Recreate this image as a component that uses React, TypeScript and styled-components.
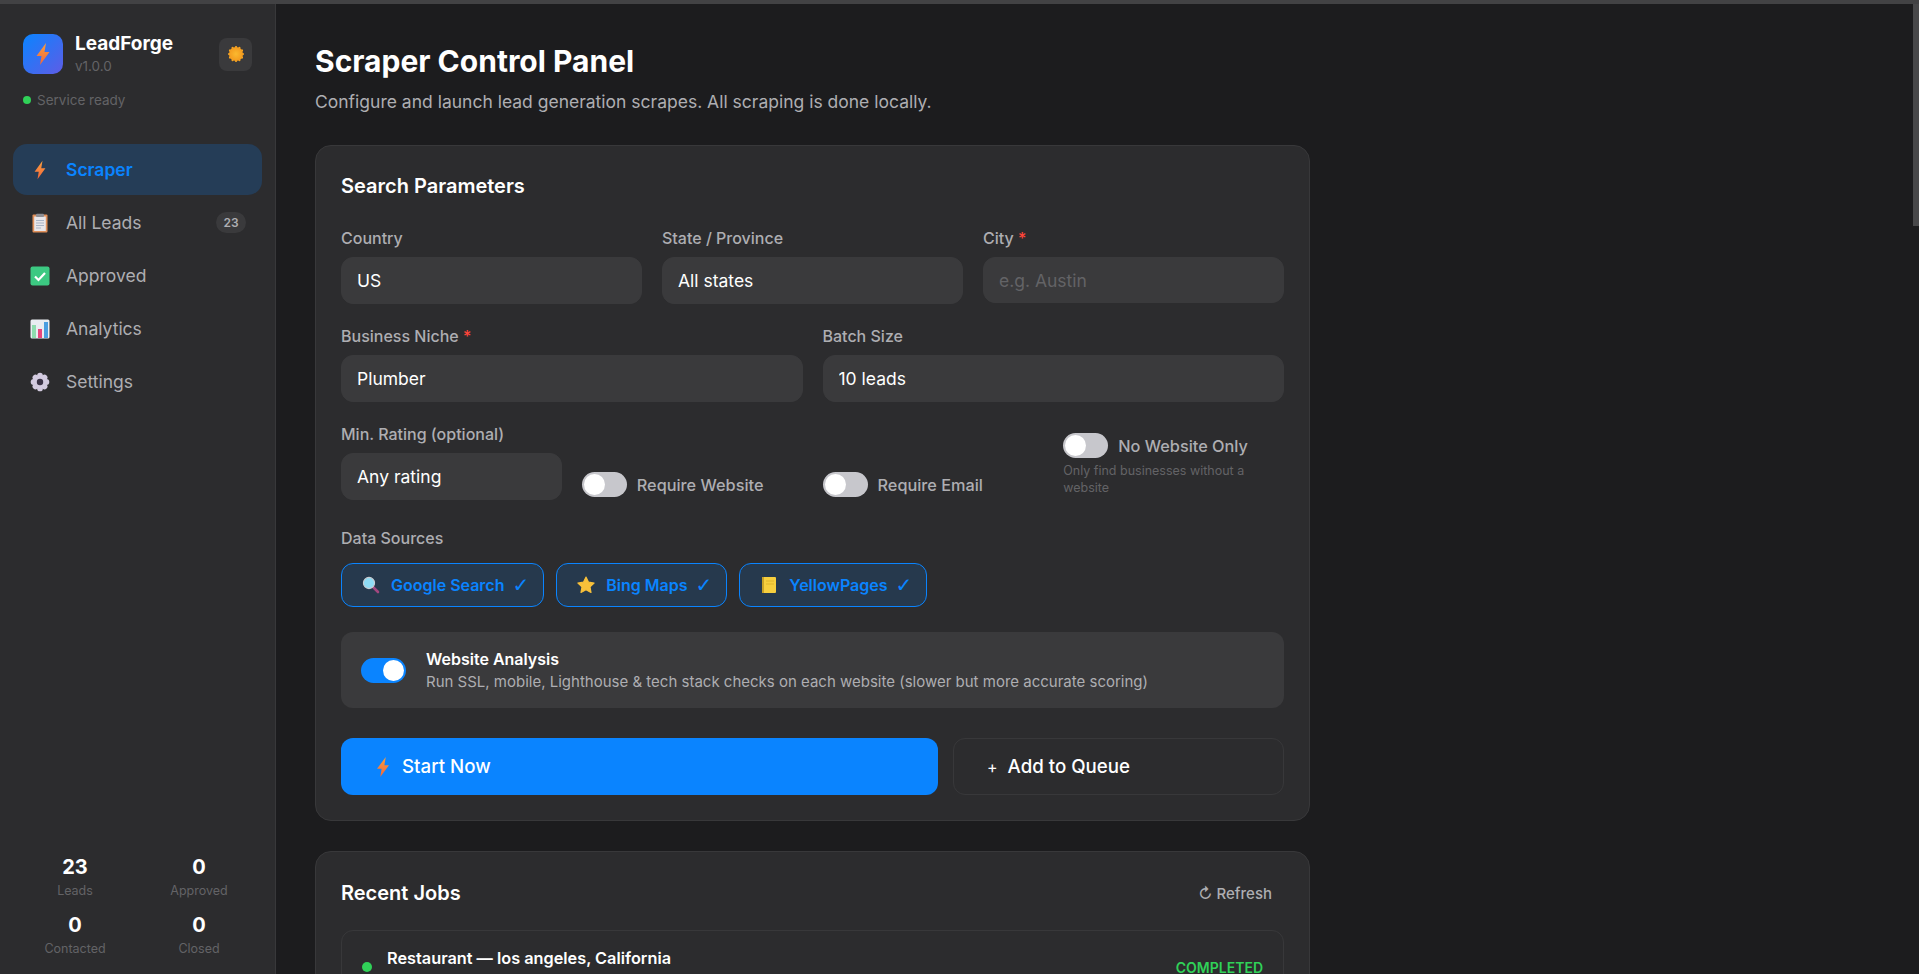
import React from "react";
import styled, { createGlobalStyle } from "styled-components";

const GlobalStyle = createGlobalStyle`
  * { box-sizing: border-box; }
  html, body { margin: 0; height: 100%; overflow: hidden; background: #1c1c1e; }
  body { font-family: Inter, "Noto Sans", "Liberation Sans", sans-serif; color: #fff; }
`;

function Bolt({ size = 20 }: { size?: number }) {
  const id = `bolt-${size}`;
  return (
    <svg width={size} height={size} viewBox="0 0 24 24">
      <defs>
        <linearGradient id={id} x1="0" y1="0" x2="0" y2="1">
          <stop offset="0" stopColor="#f9a03f" />
          <stop offset="1" stopColor="#f2653a" />
        </linearGradient>
      </defs>
      <path d="M15 1 L5.5 14 H10.5 L9 23 L18.5 10 H13.5 Z" fill={`url(#${id})`} />
    </svg>
  );
}

function Sun() {
  const rays = Array.from({ length: 12 }, (_, i) => i * 30);
  return (
    <svg width="18" height="18" viewBox="0 0 24 24">
      <defs>
        <radialGradient id="sun">
          <stop offset="0" stopColor="#fbb92f" />
          <stop offset="1" stopColor="#f39a1e" />
        </radialGradient>
      </defs>
      {rays.map((r) => (
        <circle key={r} cx="12" cy="2.8" r="1.5" fill="#f5a623" transform={`rotate(${r} 12 12)`} />
      ))}
      <circle cx="12" cy="12" r="9.4" fill="url(#sun)" />
    </svg>
  );
}

function Clipboard() {
  return (
    <svg width="20" height="20" viewBox="0 0 20 20">
      <rect x="2.5" y="1.5" width="15" height="18" rx="1" fill="#e0905a" />
      <rect x="4.2" y="3.5" width="11.6" height="14.5" fill="#e8e6ea" />
      <rect x="6" y="0.8" width="8" height="3.2" rx="1" fill="#8e8e93" />
      <path d="M6 7.5h8M6 10h8M6 12.5h8M6 15h5" stroke="#a9b4c6" strokeWidth="1.1" />
    </svg>
  );
}

function CheckBox() {
  return (
    <svg width="20" height="20" viewBox="0 0 20 20">
      <rect x="0.5" y="0.5" width="19" height="19" rx="2" fill="#3cc982" />
      <path d="M5 10.5 L8.5 14 L15 7" fill="none" stroke="#fff" strokeWidth="2.2" />
    </svg>
  );
}

function BarChart() {
  return (
    <svg width="20" height="20" viewBox="0 0 20 20">
      <rect x="0.5" y="0.5" width="19" height="19" rx="1.5" fill="#e9edf1" />
      <rect x="2" y="6" width="4" height="13" fill="#8fdcae" />
      <rect x="8" y="10" width="4" height="9" fill="#e8467c" />
      <rect x="14" y="3" width="4" height="16" fill="#4a9ee0" />
    </svg>
  );
}

function Gear() {
  const teeth = Array.from({ length: 8 }, (_, i) => i * 45);
  return (
    <svg width="20" height="20" viewBox="0 0 20 20">
      {teeth.map((r) => (
        <circle key={r} cx="10" cy="3.6" r="2.9" fill="#d3cbe0" transform={`rotate(${r} 10 10)`} />
      ))}
      <circle cx="10" cy="10" r="6" fill="#d3cbe0" />
      <circle cx="10" cy="10" r="3.2" fill="#3a3346" />
    </svg>
  );
}

function Magnifier() {
  return (
    <svg width="18" height="18" viewBox="0 0 18 18">
      <path d="M11 11 L16 16" stroke="#a2477f" strokeWidth="2.6" strokeLinecap="round" />
      <circle cx="7" cy="7" r="5.6" fill="#8fdcf5" stroke="#c8ccd2" strokeWidth="1.1" />
    </svg>
  );
}

function Star() {
  return (
    <svg width="18" height="18" viewBox="0 0 24 24">
      <path
        d="M12 1.5 L15.4 8.2 L22.8 9.3 L17.4 14.5 L18.7 22 L12 18.4 L5.3 22 L6.6 14.5 L1.2 9.3 L8.6 8.2 Z"
        fill="#f8c03a"
        stroke="#f8c03a"
        strokeWidth="1.5"
        strokeLinejoin="round"
      />
    </svg>
  );
}

function Notebook() {
  return (
    <svg width="18" height="18" viewBox="0 0 18 18">
      <rect x="2" y="1" width="14" height="16" rx="1" fill="#f7cf3e" />
      <rect x="2" y="1" width="2" height="16" fill="#c9a227" />
      <path d="M6 5h8M6 8h8" stroke="#e0b52c" strokeWidth="1" />
    </svg>
  );
}

const navItems = [
  { label: "Scraper", icon: <Bolt size={22} />, active: true },
  { label: "All Leads", icon: <Clipboard />, badge: "23" },
  { label: "Approved", icon: <CheckBox /> },
  { label: "Analytics", icon: <BarChart /> },
  { label: "Settings", icon: <Gear /> },
];

const stats = [
  { value: "23", label: "Leads" },
  { value: "0", label: "Approved" },
  { value: "0", label: "Contacted" },
  { value: "0", label: "Closed" },
];

const sources = [
  { label: "Google Search", icon: <Magnifier /> },
  { label: "Bing Maps", icon: <Star /> },
  { label: "YellowPages", icon: <Notebook /> },
];

function App() {
  return (
    <Page>
      <GlobalStyle />
      <TopStrip />
      <Shell>
        <Sidebar>
          <BrandRow>
            <LogoTile>
              <Bolt size={24} />
            </LogoTile>
            <BrandText>
              <BrandName>LeadForge</BrandName>
              <BrandVersion>v1.0.0</BrandVersion>
            </BrandText>
            <ThemeButton>
              <Sun />
            </ThemeButton>
          </BrandRow>
          <ServiceRow>
            <ServiceDot />
            Service ready
          </ServiceRow>
          <Nav>
            {navItems.map((item) => (
              <NavItem key={item.label} $active={item.active}>
                <NavIcon>{item.icon}</NavIcon>
                {item.label}
                {item.badge && <NavBadge>{item.badge}</NavBadge>}
              </NavItem>
            ))}
          </Nav>
          <StatsGrid>
            {stats.map((s) => (
              <StatCell key={s.label}>
                <StatValue>{s.value}</StatValue>
                <StatLabel>{s.label}</StatLabel>
              </StatCell>
            ))}
          </StatsGrid>
        </Sidebar>

        <Main>
          <Content>
            <PageTitle>Scraper Control Panel</PageTitle>
            <PageSub>Configure and launch lead generation scrapes. All scraping is done locally.</PageSub>

            <Card>
              <CardTitle>Search Parameters</CardTitle>
              <ThreeCols>
                <Field>
                  <Label>Country</Label>
                  <Select defaultValue="US">
                    <option>US</option>
                  </Select>
                </Field>
                <Field>
                  <Label>State / Province</Label>
                  <Select defaultValue="All states">
                    <option>All states</option>
                  </Select>
                </Field>
                <Field>
                  <Label>
                    City <Required>*</Required>
                  </Label>
                  <TextInput placeholder="e.g. Austin" />
                </Field>
              </ThreeCols>
              <TwoCols>
                <Field>
                  <Label>
                    Business Niche <Required>*</Required>
                  </Label>
                  <Select defaultValue="Plumber">
                    <option>Plumber</option>
                  </Select>
                </Field>
                <Field>
                  <Label>Batch Size</Label>
                  <Select defaultValue="10 leads">
                    <option>10 leads</option>
                  </Select>
                </Field>
              </TwoCols>
              <FourCols>
                <Field>
                  <Label>Min. Rating (optional)</Label>
                  <Select defaultValue="Any rating">
                    <option>Any rating</option>
                  </Select>
                </Field>
                <ToggleRow>
                  <Toggle />
                  <ToggleLabel>Require Website</ToggleLabel>
                </ToggleRow>
                <ToggleRow>
                  <Toggle />
                  <ToggleLabel>Require Email</ToggleLabel>
                </ToggleRow>
                <div>
                  <ToggleRow>
                    <Toggle />
                    <ToggleLabel>No Website Only</ToggleLabel>
                  </ToggleRow>
                  <ToggleHint>Only find businesses without a website</ToggleHint>
                </div>
              </FourCols>

              <Label>Data Sources</Label>
              <Chips>
                {sources.map((s) => (
                  <Chip key={s.label}>
                    <ChipIcon>{s.icon}</ChipIcon>
                    {s.label}
                    <ChipCheck>✓</ChipCheck>
                  </Chip>
                ))}
              </Chips>

              <AnalysisBox>
                <Toggle $on />
                <div>
                  <AnalysisTitle>Website Analysis</AnalysisTitle>
                  <AnalysisDesc>
                    Run SSL, mobile, Lighthouse &amp; tech stack checks on each website (slower but more accurate scoring)
                  </AnalysisDesc>
                </div>
              </AnalysisBox>

              <Actions>
                <StartButton>
                  <Bolt size={22} />
                  Start Now
                </StartButton>
                <QueueButton>
                  <QueuePlus>+</QueuePlus>
                  Add to Queue
                </QueueButton>
              </Actions>
            </Card>

            <JobsCard>
              <JobsHeader>
                <JobsTitle>Recent Jobs</JobsTitle>
                <RefreshButton>↻ Refresh</RefreshButton>
              </JobsHeader>
              <JobRow>
                <JobDot />
                <JobName>Restaurant — los angeles, California</JobName>
                <JobStatus>COMPLETED</JobStatus>
              </JobRow>
            </JobsCard>
          </Content>
        </Main>
        <ScrollThumb />
      </Shell>
    </Page>
  );
}

const Page = styled.div`
  height: 974px;
  display: flex;
  flex-direction: column;
  background: #1c1c1e;
`;
const TopStrip = styled.div`
  height: 4px;
  flex: none;
  background: #424244;
`;
const Shell = styled.div`
  position: relative;
  flex: 1;
  min-height: 0;
  display: flex;
`;
const ScrollThumb = styled.div`
  position: absolute;
  top: 0;
  right: 0;
  width: 6px;
  height: 222px;
  background: #48484a;
`;

// sidebar
const Sidebar = styled.aside`
  width: 276px;
  flex: none;
  display: flex;
  flex-direction: column;
  background: #2c2c2e;
  border-right: 1px solid #38383a;
  padding: 29px 13px 0;
`;
const BrandRow = styled.div`
  display: flex;
  align-items: center;
  padding-left: 10px;
  padding-right: 10px;
`;
const LogoTile = styled.div`
  width: 40px;
  height: 40px;
  border-radius: 10px;
  background: linear-gradient(135deg, #0a84ff, #5e5ce6);
  display: flex;
  align-items: center;
  justify-content: center;
`;
const BrandText = styled.div`
  margin-left: 12px;
  flex: 1;
`;
const BrandName = styled.div`
  font-size: 19px;
  font-weight: 700;
  line-height: 22px;
`;
const BrandVersion = styled.div`
  font-size: 13.5px;
  line-height: 18px;
  color: #636366;
  margin-top: 2px;
`;
const ThemeButton = styled.div`
  width: 33px;
  height: 33px;
  border-radius: 8px;
  background: #3a3a3c;
  display: flex;
  align-items: center;
  justify-content: center;
`;
const ServiceRow = styled.div`
  display: flex;
  align-items: center;
  gap: 6px;
  margin: 16px 0 0 10px;
  font-size: 13.5px;
  line-height: 18px;
  color: #636366;
`;
const ServiceDot = styled.span`
  width: 8px;
  height: 8px;
  border-radius: 50%;
  background: #30d158;
`;
const Nav = styled.nav`
  display: flex;
  flex-direction: column;
  gap: 2px;
  margin-top: 35px;
`;
const NavItem = styled.div<{ $active?: boolean }>`
  height: 51px;
  display: flex;
  align-items: center;
  padding: 0 16px 0 17px;
  border-radius: 14px;
  font-size: 17.5px;
  font-weight: ${(p) => (p.$active ? 600 : 400)};
  color: ${(p) => (p.$active ? "#0a84ff" : "#aeaeb2")};
  background: ${(p) => (p.$active ? "rgba(10, 132, 255, 0.2)" : "transparent")};
`;
const NavIcon = styled.span`
  width: 20px;
  height: 22px;
  margin-right: 16px;
  display: flex;
  align-items: center;
  justify-content: center;
`;
const NavBadge = styled.span`
  margin-left: auto;
  width: 30px;
  height: 21px;
  border-radius: 11px;
  background: #3a3a3c;
  font-size: 12px;
  font-weight: 600;
  line-height: 21px;
  text-align: center;
`;
const StatsGrid = styled.div`
  margin-top: auto;
  display: grid;
  grid-template-columns: 124px 124px;
  row-gap: 14px;
  padding-bottom: 17px;
`;
const StatCell = styled.div`
  text-align: center;
`;
const StatValue = styled.div`
  font-size: 20px;
  font-weight: 700;
  line-height: 24px;
`;
const StatLabel = styled.div`
  font-size: 12.5px;
  line-height: 16px;
  margin-top: 4px;
  color: #636366;
`;

// main
const Main = styled.main`
  flex: 1;
  min-width: 0;
  overflow: hidden;
  padding: 40px 0 0 39px;
`;
const Content = styled.div`
  width: 995px;
`;
const PageTitle = styled.h1`
  margin: 0;
  font-size: 30px;
  font-weight: 700;
  line-height: 34px;
`;
const PageSub = styled.p`
  margin: 12px 0 0;
  font-size: 17.5px;
  line-height: 24px;
  color: #aeaeb2;
`;
const Card = styled.section`
  margin-top: 31px;
  background: #2c2c2e;
  border: 1px solid #38383a;
  border-radius: 16px;
  padding: 25px;
`;
const CardTitle = styled.h2`
  margin: 0 0 26px;
  font-size: 20px;
  font-weight: 600;
  line-height: 30px;
`;
const ThreeCols = styled.div`
  display: grid;
  grid-template-columns: repeat(3, 1fr);
  gap: 20px;
  margin-bottom: 21px;
`;
const TwoCols = styled.div`
  display: grid;
  grid-template-columns: repeat(2, 1fr);
  gap: 20px;
  margin-bottom: 21px;
`;
const FourCols = styled.div`
  display: grid;
  grid-template-columns: repeat(4, 1fr);
  gap: 20px;
  align-items: end;
  margin-bottom: 27px;
`;
const Field = styled.div`
  display: flex;
  flex-direction: column;
`;
const Label = styled.label`
  display: block;
  font-size: 16px;
  font-weight: 500;
  line-height: 23px;
  margin-bottom: 7px;
  color: #aeaeb2;
`;
const Required = styled.span`
  color: #ff453a;
`;
const Select = styled.select`
  appearance: none;
  height: 47px;
  width: 100%;
  border: 1px solid #3a3a3c;
  border-radius: 12px;
  background: #3a3a3c;
  padding: 0 15px;
  font: 400 17.5px Inter, sans-serif;
  color: #fff;
`;
const TextInput = styled.input`
  height: 46px;
  width: 100%;
  border: 1px solid #3a3a3c;
  border-radius: 12px;
  background: #3a3a3c;
  padding: 0 15px;
  font: 400 17.5px Inter, sans-serif;
  color: #fff;
  &::placeholder {
    color: #636366;
    opacity: 1;
  }
`;
const ToggleRow = styled.div`
  display: flex;
  align-items: center;
  gap: 10px;
  height: 25px;
  margin-bottom: 3px;
`;
const Toggle = styled.span<{ $on?: boolean }>`
  position: relative;
  flex: none;
  width: 45px;
  height: 25px;
  border-radius: 13px;
  background: ${(p) => (p.$on ? "#0a84ff" : "#c7c7cc")};
  &::after {
    content: "";
    position: absolute;
    top: 2px;
    left: ${(p) => (p.$on ? "22px" : "2px")};
    width: 21px;
    height: 21px;
    border-radius: 50%;
    background: #fff;
  }
`;
const ToggleLabel = styled.span`
  font-size: 16.3px;
  font-weight: 500;
  color: #aeaeb2;
`;
const ToggleHint = styled.div`
  font-size: 12.5px;
  line-height: 17px;
  margin-top: 4px;
  padding-bottom: 4px;
  color: #636366;
`;
const Chips = styled.div`
  display: flex;
  gap: 12px;
  margin-top: 13px;
`;
const Chip = styled.div`
  height: 44px;
  display: flex;
  align-items: center;
  padding: 0 14px 0 20px;
  border: 1px solid #0a84ff;
  border-radius: 12px;
  background: rgba(10, 132, 255, 0.15);
  color: #0a84ff;
  font-size: 16px;
  font-weight: 600;
`;
const ChipIcon = styled.span`
  display: flex;
  margin-right: 11px;
`;
const ChipCheck = styled.span`
  margin-left: 8px;
  font-family: "DejaVu Sans", sans-serif;
  font-size: 20px;
`;
const AnalysisBox = styled.div`
  margin-top: 25px;
  height: 76px;
  display: flex;
  align-items: center;
  gap: 20px;
  padding: 0 20px;
  border-radius: 12px;
  background: #3a3a3c;
`;
const AnalysisTitle = styled.div`
  font-size: 16px;
  font-weight: 600;
  line-height: 22px;
`;
const AnalysisDesc = styled.div`
  font-size: 15px;
  line-height: 20px;
  margin-top: 2px;
  color: #aeaeb2;
`;
const Actions = styled.div`
  display: flex;
  gap: 15px;
  margin-top: 30px;
`;
const StartButton = styled.button`
  flex: none;
  width: 597px;
  height: 57px;
  display: flex;
  align-items: center;
  gap: 8px;
  padding: 0 31px;
  border: none;
  border-radius: 12px;
  background: #0a84ff;
  color: #fff;
  font: 500 18.7px Inter, sans-serif;
`;
const QueueButton = styled.button`
  flex: 1;
  height: 57px;
  display: flex;
  align-items: center;
  gap: 10px;
  padding: 0 33px;
  border: 1px solid #38383a;
  border-radius: 12px;
  background: transparent;
  color: #fff;
  font: 500 18.7px Inter, sans-serif;
`;
const QueuePlus = styled.span`
  font-weight: 400;
  font-size: 16px;
`;
const JobsCard = styled(Card)`
  margin-top: 30px;
`;
const JobsHeader = styled.div`
  display: flex;
  align-items: center;
  justify-content: space-between;
  padding-top: 1px;
  margin-bottom: 22px;
`;
const JobsTitle = styled.h2`
  margin: 0;
  font-size: 20px;
  font-weight: 600;
  line-height: 30px;
`;
const RefreshButton = styled.span`
  padding-right: 12px;
  font-size: 15px;
  font-weight: 500;
  color: #aeaeb2;
`;
const JobRow = styled.div`
  display: flex;
  align-items: center;
  height: 74px;
  padding: 0 20px;
  border: 1px solid #38383a;
  border-radius: 12px;
`;
const JobDot = styled.span`
  width: 10px;
  height: 10px;
  border-radius: 50%;
  background: #30d158;
  margin: 0 15px 0 0;
`;
const JobName = styled.div`
  flex: 1;
  align-self: flex-start;
  padding-top: 16px;
  font-size: 16.3px;
  font-weight: 600;
  line-height: 22px;
`;
const JobStatus = styled.span`
  font-size: 14px;
  font-weight: 600;
  color: #30d158;
`;

export default App;
